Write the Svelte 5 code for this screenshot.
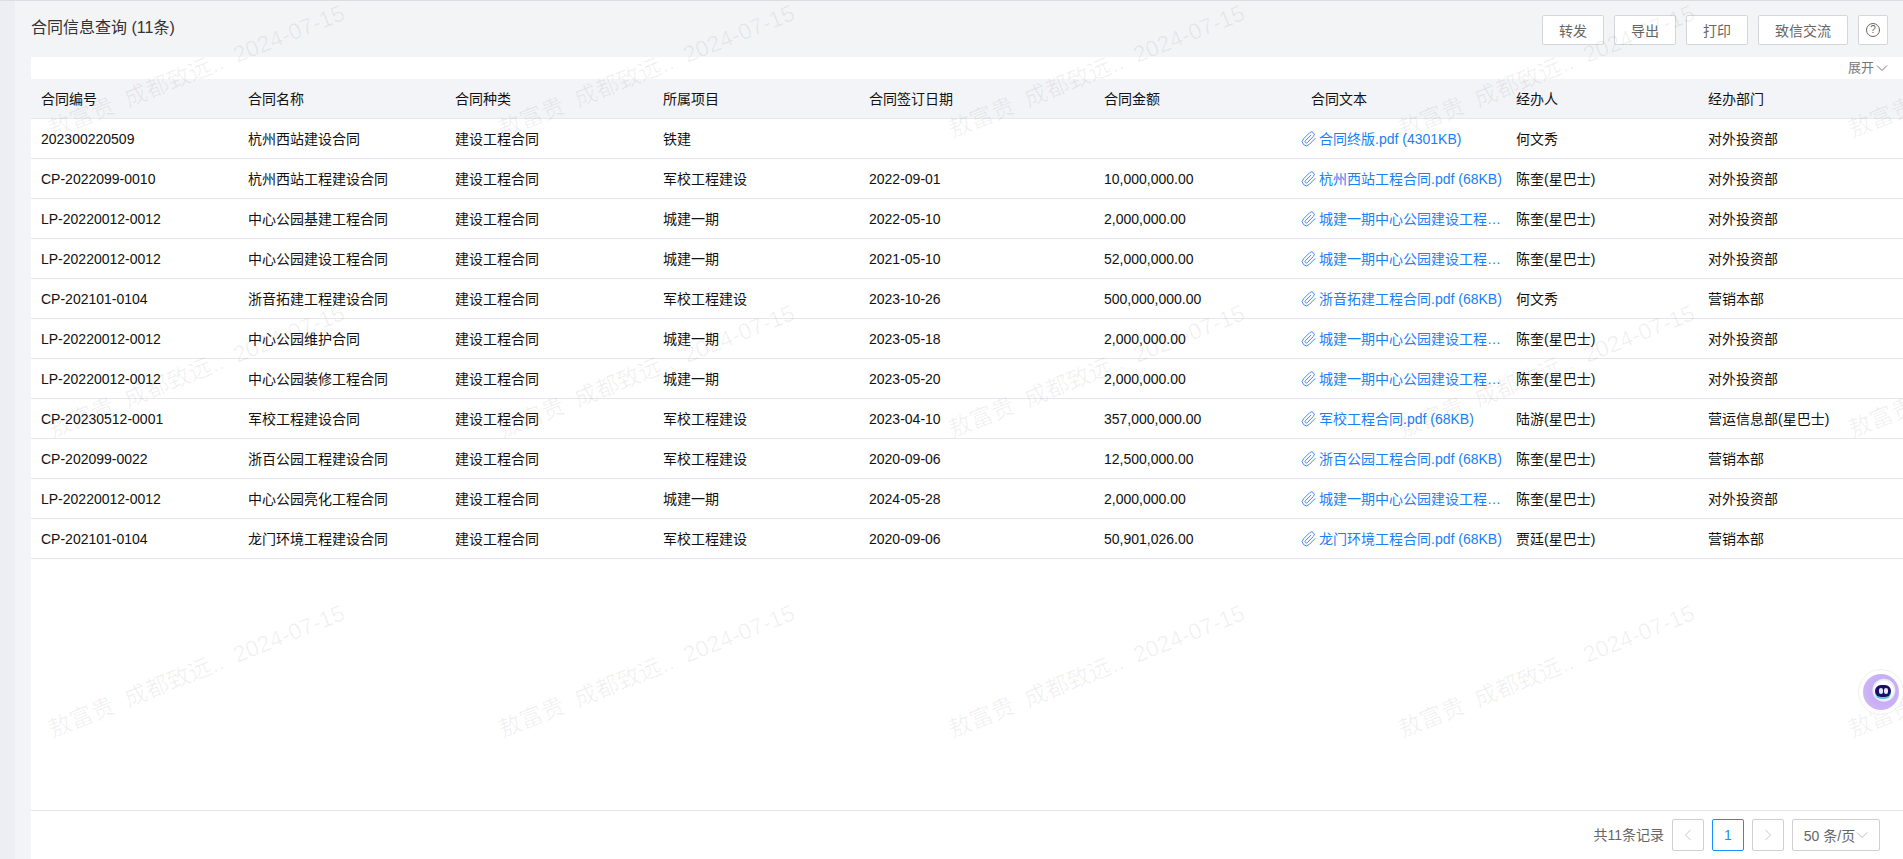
<script>
	const columns = ['合同编号', '合同名称', '合同种类', '所属项目', '合同签订日期', '合同金额', '合同文本', '经办人', '经办部门'];
	const cityFile = '城建一期中心公园建设工程合同文本.pdf (68KB)';

	const rows = [
		['202300220509', '杭州西站建设合同', '建设工程合同', '铁建', '', '', '合同终版.pdf (4301KB)', '何文秀', '对外投资部'],
		['CP-2022099-0010', '杭州西站工程建设合同', '建设工程合同', '军校工程建设', '2022-09-01', '10,000,000.00', '杭州西站工程合同.pdf (68KB)', '陈奎(星巴士)', '对外投资部'],
		['LP-20220012-0012', '中心公园基建工程合同', '建设工程合同', '城建一期', '2022-05-10', '2,000,000.00', cityFile, '陈奎(星巴士)', '对外投资部'],
		['LP-20220012-0012', '中心公园建设工程合同', '建设工程合同', '城建一期', '2021-05-10', '52,000,000.00', cityFile, '陈奎(星巴士)', '对外投资部'],
		['CP-202101-0104', '浙音拓建工程建设合同', '建设工程合同', '军校工程建设', '2023-10-26', '500,000,000.00', '浙音拓建工程合同.pdf (68KB)', '何文秀', '营销本部'],
		['LP-20220012-0012', '中心公园维护合同', '建设工程合同', '城建一期', '2023-05-18', '2,000,000.00', cityFile, '陈奎(星巴士)', '对外投资部'],
		['LP-20220012-0012', '中心公园装修工程合同', '建设工程合同', '城建一期', '2023-05-20', '2,000,000.00', cityFile, '陈奎(星巴士)', '对外投资部'],
		['CP-20230512-0001', '军校工程建设合同', '建设工程合同', '军校工程建设', '2023-04-10', '357,000,000.00', '军校工程合同.pdf (68KB)', '陆游(星巴士)', '营运信息部(星巴士)'],
		['CP-202099-0022', '浙百公园工程建设合同', '建设工程合同', '军校工程建设', '2020-09-06', '12,500,000.00', '浙百公园工程合同.pdf (68KB)', '陈奎(星巴士)', '营销本部'],
		['LP-20220012-0012', '中心公园亮化工程合同', '建设工程合同', '城建一期', '2024-05-28', '2,000,000.00', cityFile, '陈奎(星巴士)', '对外投资部'],
		['CP-202101-0104', '龙门环境工程建设合同', '建设工程合同', '军校工程建设', '2020-09-06', '50,901,026.00', '龙门环境工程合同.pdf (68KB)', '贾廷(星巴士)', '营销本部']
	];

	const actions = ['转发', '导出', '打印', '致信交流'];
	const marks = Array.from({ length: 20 });
</script>

<div class="page">
	<div class="rail"></div>
	<main class="content">
		<header class="topbar">
			<h1>合同信息查询 (11条)</h1>
			<div class="actions">
				{#each actions as label}
					<button class="btn">{label}</button>
				{/each}
				<button class="btn help" aria-label="帮助">
					<svg viewBox="0 0 16 16" width="16" height="16">
						<circle cx="8" cy="8" r="6.5" fill="none" stroke="currentColor" />
						<text x="8" y="11.2" text-anchor="middle" class="help-mark">?</text>
					</svg>
				</button>
			</div>
		</header>

		<section class="card">
			<div class="expand">
				<span>展开</span>
				<svg viewBox="0 0 12 12" width="12" height="12">
					<path d="M1 3.5 6 8.5 11 3.5" fill="none" stroke="currentColor" />
				</svg>
			</div>

			<table>
				<colgroup>
					<col class="c1" /><col class="c2" /><col class="c3" /><col class="c4" /><col class="c5" /><col class="c6" /><col class="c7" /><col class="c8" /><col />
				</colgroup>
				<thead>
					<tr>
						{#each columns as name, i}
							<th class:file-head={i === 6}>{name}</th>
						{/each}
					</tr>
				</thead>
				<tbody>
					{#each rows as row}
						<tr>
							{#each row as value, i}
								{#if i === 6}
									<td class="file">
										<div class="file-link">
											<svg viewBox="0 0 24 24" width="16" height="16">
												<path d="M21.44 11.05l-9.19 9.19a6 6 0 0 1-8.49-8.49l9.19-9.19a4 4 0 0 1 5.66 5.66l-9.2 9.19a2 2 0 0 1-2.83-2.83l8.49-8.48" fill="none" stroke="#4a86f5" stroke-width="1.5" />
											</svg>
											<span>{value}</span>
										</div>
									</td>
								{:else}
									<td>{value}</td>
								{/if}
							{/each}
						</tr>
					{/each}
				</tbody>
			</table>

			<footer class="pager">
				<span class="total">共11条记录</span>
				<button class="page-btn" aria-label="上一页">
					<svg viewBox="0 0 12 12" width="12" height="12"><path d="M8.5 1 3.5 6 8.5 11" fill="none" stroke="currentColor" /></svg>
				</button>
				<button class="page-btn current">1</button>
				<button class="page-btn" aria-label="下一页">
					<svg viewBox="0 0 12 12" width="12" height="12"><path d="M3.5 1 8.5 6 3.5 11" fill="none" stroke="currentColor" /></svg>
				</button>
				<button class="size">
					50 条/页
					<svg viewBox="0 0 12 12" width="12" height="12"><path d="M1 3.5 6 8.5 11 3.5" fill="none" stroke="currentColor" /></svg>
				</button>
			</footer>
		</section>
	</main>

	<!-- watermark and floating assistant lie over the page -->
	<div class="watermarks" aria-hidden="true">
		{#each marks as _}
			<div class="mark"><span>敖富贵  成都致远..  2024-07-15</span></div>
		{/each}
	</div>

	<div class="assistant">
		<div class="orb">
			<div class="face"><i></i><i></i></div>
		</div>
	</div>
</div>

<style>
	:global(body) {
		margin: 0;
		overflow: hidden;
	}
	.page {
		position: relative;
		display: flex;
		height: 859px;
		overflow: hidden;
		border-top: 1px solid #dcdde1;
		box-sizing: border-box;
		background: #f3f4f6;
		font-family: 'Liberation Sans', 'Noto Sans CJK SC', sans-serif;
		font-size: 14px;
		line-height: 20px;
		color: #111;
	}
	.rail {
		width: 15px;
		flex: none;
		background: #eceef4;
	}
	.content {
		flex: 1;
		min-width: 0;
		display: flex;
		flex-direction: column;
	}
	.topbar {
		height: 56px;
		flex: none;
		display: flex;
		justify-content: space-between;
		padding: 14px 15px 0 16px;
		box-sizing: border-box;
	}
	h1 {
		margin: 0;
		font-size: 16px;
		font-weight: 400;
		line-height: 26px;
		color: #333;
	}
	.actions {
		display: flex;
		gap: 10px;
		height: 30px;
	}
	button {
		font-family: inherit;
		font-size: 14px;
		padding: 0;
		background: #fff;
		border: 1px solid #d4d6da;
		border-radius: 2px;
		box-sizing: border-box;
	}
	.btn {
		width: 62px;
		height: 30px;
		color: #666;
	}
	.btn:nth-child(4) {
		width: 90px;
	}
	.btn.help {
		width: 30px;
		display: flex;
		align-items: center;
		justify-content: center;
	}
	.help-mark {
		font-size: 10px;
		fill: currentColor;
	}
	.card {
		flex: 1;
		display: flex;
		flex-direction: column;
		margin-left: 16px;
		background: #fff;
		min-height: 0;
	}
	.expand {
		height: 22px;
		display: flex;
		align-items: center;
		justify-content: flex-end;
		gap: 2px;
		padding-right: 15px;
		font-size: 13px;
		color: #777;
	}
	table {
		width: 100%;
		table-layout: fixed;
		border-collapse: collapse;
	}
	.c1, .c2 { width: 207px; }
	.c3 { width: 208px; }
	.c4 { width: 206px; }
	.c5 { width: 235px; }
	.c6 { width: 199px; }
	.c7 { width: 213px; }
	.c8 { width: 192px; }
	th {
		height: 39px;
		padding: 0 10px;
		background: #f3f4f7;
		border-bottom: 1px solid #e6e7ec;
		text-align: left;
		font-weight: 400;
		color: #111;
	}
	th.file-head {
		padding-left: 18px;
	}
	td {
		height: 39px;
		padding: 0 10px;
		border-bottom: 1px solid #e6e7ec;
		white-space: nowrap;
		overflow: hidden;
	}
	.file {
		padding: 0 2px 0 8px;
	}
	.file-link {
		display: flex;
		align-items: center;
		gap: 2px;
		color: #1a80f8;
		min-width: 0;
	}
	.file-link svg {
		flex: none;
	}
	.file-link span {
		overflow: hidden;
		text-overflow: ellipsis;
	}
	.pager {
		margin-top: auto;
		height: 49px;
		flex: none;
		display: flex;
		align-items: center;
		justify-content: flex-end;
		gap: 8px;
		padding-right: 23px;
		border-top: 1px solid #e6e7ec;
		box-sizing: border-box;
		color: #666;
	}
	.page-btn {
		width: 32px;
		height: 32px;
		display: flex;
		align-items: center;
		justify-content: center;
		color: #c8c8c8;
		border-color: #d0d0d0;
	}
	.page-btn.current {
		color: #1890ff;
		border-color: #1890ff;
	}
	.size {
		width: 88px;
		height: 32px;
		color: #666;
		border-color: #d0d0d0;
		display: flex;
		align-items: center;
		justify-content: center;
		gap: 1px;
	}
	.size svg {
		color: #bbb;
	}
	.watermarks {
		position: absolute;
		left: -29px;
		top: -80px;
		display: grid;
		grid-template-columns: repeat(5, 450px);
		grid-auto-rows: 300px;
		pointer-events: none;
	}
	.mark {
		display: flex;
		align-items: center;
		justify-content: center;
		white-space: pre;
		font-size: 23px;
		color: rgba(0, 0, 0, 0.06);
	}
	.mark span {
		transform: rotate(-22deg);
	}
	.assistant {
		position: absolute;
		left: 1858px;
		top: 668px;
		width: 46px;
		height: 46px;
		border: 1px solid #f0f0f2;
		border-radius: 50%;
		box-sizing: border-box;
		display: flex;
		align-items: center;
		justify-content: center;
		background: rgba(255, 255, 255, 0.7);
	}
	.orb {
		width: 36px;
		height: 36px;
		border-radius: 50%;
		background: radial-gradient(circle at 58% 45%, #fff 0 9px, #e8e6f2 11px, #c4aef6 12px, #dcbaf4 100%);
		display: flex;
		align-items: center;
		justify-content: center;
		padding: 0 0 3px 4px;
		box-sizing: border-box;
	}
	.face {
		width: 16px;
		height: 12px;
		border-radius: 7px;
		background: #1a0f66;
		box-shadow: 0 2px 0 #5cc4e8;
		display: flex;
		align-items: center;
		justify-content: center;
		gap: 1px;
	}
	.face i {
		width: 4px;
		height: 6px;
		border-radius: 2px;
		background: #e8e8ff;
	}
</style>
